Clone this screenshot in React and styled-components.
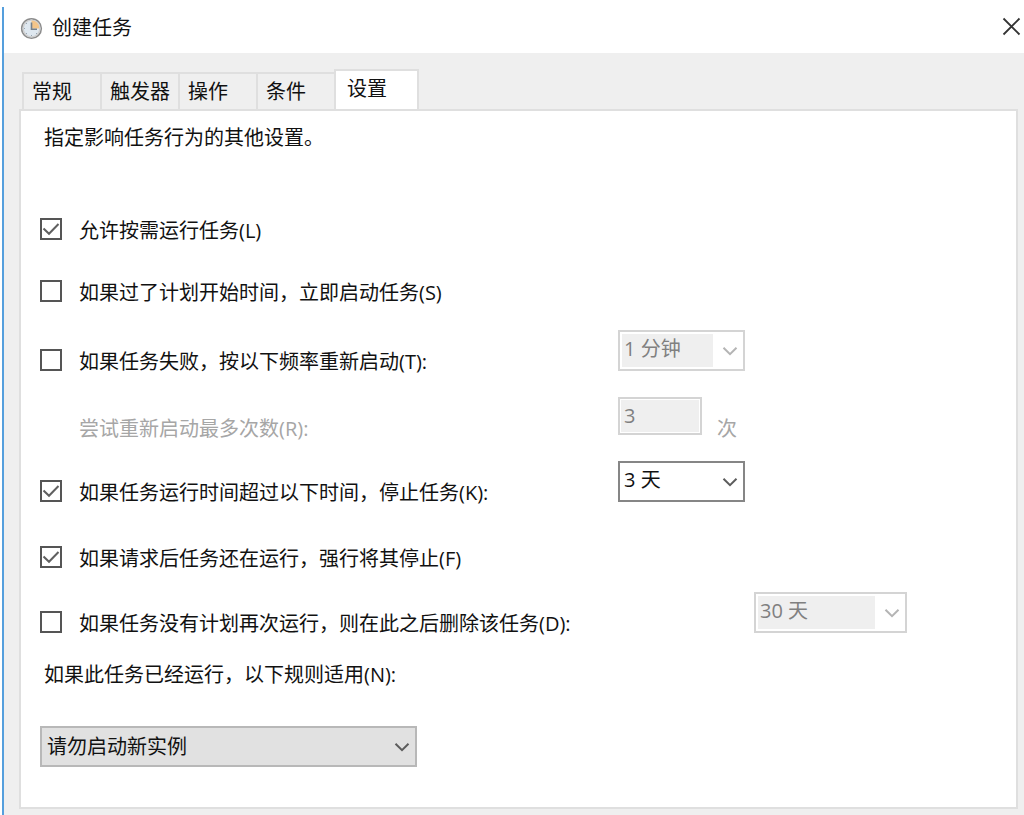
import React from "react";
import styled, { createGlobalStyle } from "styled-components";

const GlobalStyle = createGlobalStyle`
  *, *::before, *::after { box-sizing: border-box; }
  body {
    margin: 0;
    background: #fff;
    color: #111;
    font: 20px/24px "Open Sans", "Noto Sans CJK SC", sans-serif;
  }
  button, input, select { font: inherit; color: inherit; margin: 0; }
`;

const Dialog = styled.main`
  display: flex;
  flex-direction: column;
  min-height: calc(100vh - 7px);
  margin: 7px 0 0 2px;
  border-left: 2px solid #559fdd;
  background: #efefef;
`;

const TitleBar = styled.header`
  display: flex;
  align-items: center;
  height: 46px;
  padding-left: 16px;
  padding-bottom: 4px;
  background: #fff;
`;

const Title = styled.h1`
  flex: 1;
  margin: 0 0 0 9px;
  font-size: 20px;
  line-height: 24px;
  font-weight: 400;
`;

const CloseButton = styled.button`
  display: flex;
  padding: 0 3px 3px 8px;
  border: 0;
  background: none;
`;

const Tabs = styled.div`
  display: flex;
  align-items: flex-end;
  height: 56px;
  padding-left: 18px;
`;

const Tab = styled.button`
  flex: none;
  width: ${(p) => (p.$active ? 85 : 78)}px;
  height: ${(p) => (p.$active ? 42 : 37)}px;
  margin-bottom: ${(p) => (p.$active ? -2 : 0)}px;
  padding: 0 0 ${(p) => (p.$active ? 5 : 0)}px ${(p) => (p.$active ? 11 : 8)}px;
  border: 2px solid #dfdfdf;
  border-bottom: 0;
  border-right-width: ${(p) => (p.$active ? 2 : 0)}px;
  background: ${(p) => (p.$active ? "#fff" : "#efefef")};
  text-align: left;
  white-space: nowrap;
`;

const Panel = styled.section`
  flex: 1;
  margin: 0 6px 6px 15px;
  padding: 15px 19px 40px;
  border: 2px solid #dfdfdf;
  background: #fff;
`;

const Intro = styled.p`
  margin: 0 0 49px 4px;
`;

const Options = styled.div`
  display: grid;
  grid-template-rows: 62px 69px 67px 64px 66px 65px 66px;
`;

const Row = styled.div`
  display: grid;
  grid-template-columns: minmax(0, ${(p) => (p.$wide ? 714 : 578)}px) 1fr;
  align-items: start;
`;

const CheckLabel = styled.label`
  display: flex;
  align-items: center;
  gap: 17px;
  padding-top: 19px;
  white-space: nowrap;
`;

const IndentedLabel = styled.label`
  padding: 20px 0 0 39px;
  color: #a6a6a6;
`;

const CheckFrame = styled.span`
  display: grid;
  width: 22px;
  height: 22px;
  margin-bottom: 3px;
  > * { grid-area: 1 / 1; }
  svg { pointer-events: none; }
`;

const CheckInput = styled.input`
  appearance: none;
  width: 22px;
  height: 22px;
  border: 2px solid #555;
  background: #fff;
`;

const SelectFrame = styled.span`
  display: grid;
  align-items: center;
  width: ${(p) => p.$width}px;
  max-width: 100%;
  color: ${(p) => (p.$disabled ? "#b4b4b4" : "#5c5c5c")};
  > * { grid-area: 1 / 1; }
  svg { justify-self: end; margin-right: 7px; pointer-events: none; }
`;

const skins = {
  plain: "border-color: #868686; background: #fff; padding-bottom: 3px;",
  filled: "border-color: #b8b8b8; background: #e1e1e1; padding-left: 5px;",
  disabled: `
    border-color: #d4d4d4;
    background: linear-gradient(#efefef, #efefef) 2px 2px / calc(100% - 32px) calc(100% - 4px) no-repeat #fff;
    padding-bottom: 3px;
  `,
};

const SelectInput = styled.select`
  appearance: none;
  width: 100%;
  height: 41px;
  padding: 0 32px 0 4px;
  border: 2px solid;
  border-radius: 0;
  ${(p) => skins[p.$skin]}
  color: ${(p) => (p.$skin === "disabled" ? "#808080" : "#111")};
  opacity: 1;
`;

const CountGroup = styled.div`
  display: flex;
  gap: 15px;
`;

const CountInput = styled.input`
  width: 84px;
  height: 38px;
  padding: 0 4px 2px;
  border: 2px solid #d4d4d4;
  background: #efefef;
  box-shadow: inset 0 0 0 1px #fff;
  color: #808080;
`;

const Unit = styled.span`
  padding-top: 20px;
  color: #a6a6a6;
`;

const RuleLabel = styled.label`
  display: block;
  margin: 5px 0 39px 4px;
`;

function ClockIcon() {
  return (
    <svg width="23" height="23" viewBox="0 0 23 23" aria-hidden="true">
      <circle cx="11.5" cy="11.5" r="9.8" fill="#dfe8f0" stroke="#8c8c8c" strokeWidth="1.6" />
      <circle cx="11.5" cy="11.5" r="8.4" fill="none" stroke="#cfcfcf" strokeWidth="1.4" />
      <path d="M11.5 3.5a8 8 0 0 1 8 8h-8z" fill="#f3c58a" />
      <path d="M11.5 5.5v6.7H17" fill="none" stroke="#76818c" strokeWidth="1.6" />
      <path d="M4 11.5h1M11.5 18v1M6 6l1 1M6 17l1-1M17 17l-1-1" stroke="#97a6b3" />
    </svg>
  );
}

function Chevron() {
  return (
    <svg width="16" height="10" viewBox="0 0 16 10" aria-hidden="true">
      <path d="M1.5 1.8 8 8.2l6.5-6.4" fill="none" stroke="currentColor" strokeWidth="2" />
    </svg>
  );
}

function CheckOption({ checked, children }) {
  return (
    <CheckLabel>
      <CheckFrame>
        <CheckInput type="checkbox" defaultChecked={checked} />
        {checked && (
          <svg width="22" height="22" viewBox="0 0 22 22" aria-hidden="true">
            <path d="m3.5 10.5 5.5 5.3 9.5-9.8" fill="none" stroke="#606060" strokeWidth="2" />
          </svg>
        )}
      </CheckFrame>
      {children}
    </CheckLabel>
  );
}

function Select({ width, skin, value, ...rest }) {
  const disabled = skin === "disabled";
  return (
    <SelectFrame $width={width} $disabled={disabled}>
      <SelectInput $skin={skin} disabled={disabled} {...rest}>
        <option>{value}</option>
      </SelectInput>
      <Chevron />
    </SelectFrame>
  );
}

const tabs = ["常规", "触发器", "操作", "条件", "设置"];

export default function App() {
  return (
    <>
      <GlobalStyle />
      <Dialog>
        <TitleBar>
          <ClockIcon />
          <Title>创建任务</Title>
          <CloseButton aria-label="关闭">
            <svg width="19" height="19" viewBox="0 0 19 19" aria-hidden="true">
              <path d="m1.5 1.5 16 16m0-16-16 16" stroke="#333" strokeWidth="1.8" />
            </svg>
          </CloseButton>
        </TitleBar>
        <Tabs role="tablist">
          {tabs.map((name, i) => (
            <Tab key={name} role="tab" aria-selected={i === 4} $active={i === 4}>
              {name}
            </Tab>
          ))}
        </Tabs>
        <Panel role="tabpanel">
          <Intro>指定影响任务行为的其他设置。</Intro>
          <Options>
            <Row>
              <CheckOption checked>允许按需运行任务(L)</CheckOption>
            </Row>
            <Row>
              <CheckOption>如果过了计划开始时间，立即启动任务(S)</CheckOption>
            </Row>
            <Row>
              <CheckOption>如果任务失败，按以下频率重新启动(T):</CheckOption>
              <Select width={127} skin="disabled" value="1 分钟" aria-label="重新启动频率" />
            </Row>
            <Row>
              <IndentedLabel htmlFor="retries">尝试重新启动最多次数(R):</IndentedLabel>
              <CountGroup>
                <CountInput id="retries" defaultValue="3" disabled />
                <Unit>次</Unit>
              </CountGroup>
            </Row>
            <Row>
              <CheckOption checked>如果任务运行时间超过以下时间，停止任务(K):</CheckOption>
              <Select width={127} skin="plain" value="3 天" aria-label="停止任务时间" />
            </Row>
            <Row>
              <CheckOption checked>如果请求后任务还在运行，强行将其停止(F)</CheckOption>
            </Row>
            <Row $wide>
              <CheckOption>如果任务没有计划再次运行，则在此之后删除该任务(D):</CheckOption>
              <Select width={153} skin="disabled" value="30 天" aria-label="删除任务时间" />
            </Row>
          </Options>
          <RuleLabel htmlFor="rule">如果此任务已经运行，以下规则适用(N):</RuleLabel>
          <Select id="rule" width={377} skin="filled" value="请勿启动新实例" />
        </Panel>
      </Dialog>
    </>
  );
}
